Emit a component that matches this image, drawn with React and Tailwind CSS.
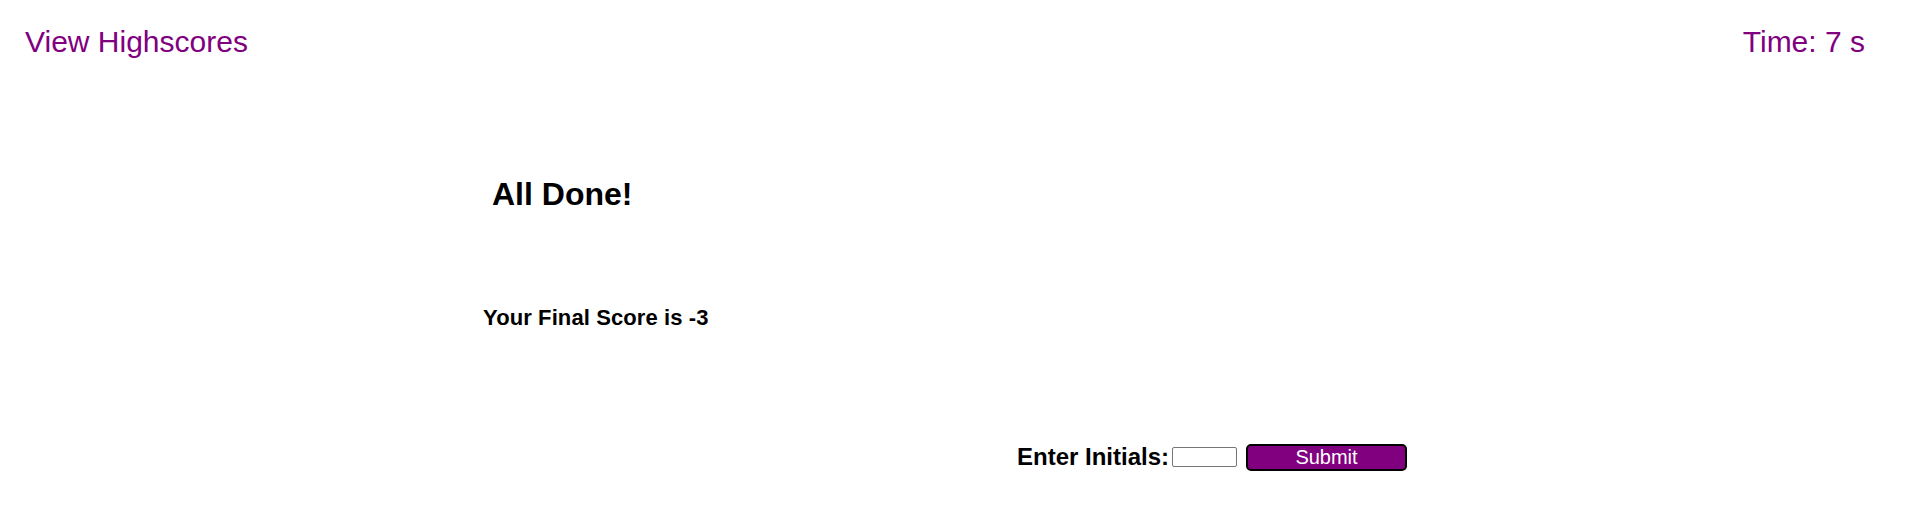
export default function App() {
  return (
    <div className="font-['Liberation_Sans',Arial,sans-serif] bg-white min-h-[507px]">
      <header className="flex justify-between pl-[25px] pr-[47px] pt-[25px] text-[30px] leading-[34px] text-[#800080]">
        <a className="cursor-pointer">View Highscores</a>
        <span>Time: 7 s</span>
      </header>
      <main>
        <h1 className="ml-[492px] mt-[117px] text-[32px] leading-[37px] font-bold text-black">All Done!</h1>
        <p className="ml-[483px] mt-[92px] text-[22px] leading-[25px] font-bold text-black tracking-[0.1px]">Your Final Score is -3</p>
        <div className="flex items-center ml-[1017px] mt-[113px] h-[28px]">
          <label className="w-[155px] text-[24px] leading-[28px] font-bold text-black whitespace-nowrap">Enter Initials:</label>
          <input type="text" className="w-[65px] h-[20px] border border-[#767676] rounded-[2px] bg-white" />
          <button className="ml-[9px] w-[161px] h-[27px] bg-[#800080] border-2 border-black rounded-[5px] text-white text-[20px] leading-[22px]">Submit</button>
        </div>
      </main>
    </div>
  );
}
